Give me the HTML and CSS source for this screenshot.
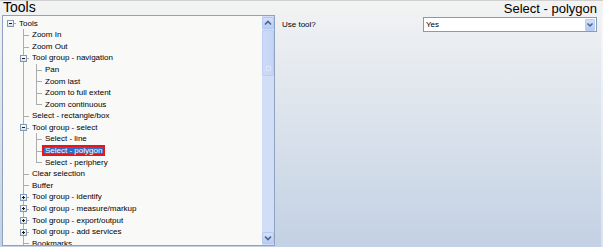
FILE: index.html
```html
<!DOCTYPE html>
<html>
<head>
<meta charset="utf-8">
<link rel="stylesheet" href="styles.css">
</head>
<body>
<div class="app">
  <header class="titlebar">
    <span class="title-left">Tools</span>
    <span class="title-right">Select - polygon</span>
  </header>
  <div class="main">
    <div class="treebox">
      <div class="treeview">
        <ul class="tree">
          <li>
            <div class="row"><span class="gutter"><span class="exp"></span></span><span class="label">Tools</span></div>
            <ul>
              <li><div class="row"><span class="gutter"></span><span class="label">Zoom In</span></div></li>
              <li><div class="row"><span class="gutter"></span><span class="label">Zoom Out</span></div></li>
              <li>
                <div class="row"><span class="gutter"><span class="exp"></span></span><span class="label">Tool group - navigation</span></div>
                <ul>
                  <li><div class="row"><span class="gutter"></span><span class="label">Pan</span></div></li>
                  <li><div class="row"><span class="gutter"></span><span class="label">Zoom last</span></div></li>
                  <li><div class="row"><span class="gutter"></span><span class="label">Zoom to full extent</span></div></li>
                  <li class="last"><div class="row"><span class="gutter"></span><span class="label">Zoom continuous</span></div></li>
                </ul>
              </li>
              <li><div class="row"><span class="gutter"></span><span class="label">Select - rectangle/box</span></div></li>
              <li>
                <div class="row"><span class="gutter"><span class="exp"></span></span><span class="label">Tool group - select</span></div>
                <ul>
                  <li><div class="row"><span class="gutter"></span><span class="label">Select - line</span></div></li>
                  <li><div class="row"><span class="gutter"></span><span class="label sel">Select - polygon</span></div></li>
                  <li class="last"><div class="row"><span class="gutter"></span><span class="label">Select - periphery</span></div></li>
                </ul>
              </li>
              <li><div class="row"><span class="gutter"></span><span class="label">Clear selection</span></div></li>
              <li><div class="row"><span class="gutter"></span><span class="label">Buffer</span></div></li>
              <li><div class="row"><span class="gutter"><span class="exp plus"></span></span><span class="label">Tool group - identify</span></div></li>
              <li><div class="row"><span class="gutter"><span class="exp plus"></span></span><span class="label">Tool group - measure/markup</span></div></li>
              <li><div class="row"><span class="gutter"><span class="exp plus"></span></span><span class="label">Tool group - export/output</span></div></li>
              <li><div class="row"><span class="gutter"><span class="exp plus"></span></span><span class="label">Tool group - add services</span></div></li>
              <li><div class="row"><span class="gutter"></span><span class="label">Bookmarks</span></div></li>
            </ul>
          </li>
        </ul>
      </div>
      <div class="vscroll">
        <div class="sbtn">
          <svg width="10" height="10" viewBox="0 0 10 10"><path d="M2 6.5 L5 3.5 L8 6.5" fill="none" stroke="#4d6185" stroke-width="1.6"/></svg>
        </div>
        <div class="track"><div class="thumb"><span class="grip"></span></div></div>
        <div class="sbtn">
          <svg width="10" height="10" viewBox="0 0 10 10"><path d="M2 3.5 L5 6.5 L8 3.5" fill="none" stroke="#4d6185" stroke-width="1.6"/></svg>
        </div>
      </div>
    </div>
    <div class="props">
      <div class="prop-row">
        <span class="prop-label">Use tool?</span>
        <div class="combo">
          <span class="combo-val">Yes</span>
          <span class="combo-btn">
            <svg width="8" height="8" viewBox="0 0 8 8"><path d="M1.5 2.5 L4 5 L6.5 2.5" fill="none" stroke="#4d6185" stroke-width="1.5"/></svg>
          </span>
        </div>
      </div>
    </div>
  </div>
</div>
</body>
</html>
```

FILE: styles.css
```css
html, body {
  margin: 0;
  padding: 0;
  height: 247px;
  overflow: hidden;
}

body {
  font-family: "Liberation Sans", Arial, sans-serif;
  background: linear-gradient(#f3f3f3 0px, #eef0f2 22px, #c3d1e4 247px);
  color: #000;
}

.app {
  width: 603px;
  height: 247px;
  display: flex;
  flex-direction: column;
  box-sizing: border-box;
  border-top: 1px solid #cfcfcf;
}

.titlebar {
  height: 14px;
  flex: none;
  display: flex;
  justify-content: space-between;
  align-items: flex-start;
  padding: 0 6px 0 3px;
  font-size: 13px;
  line-height: 13px;
  white-space: nowrap;
}

.title-left {
  font-size: 14px;
}

.title-right {
  margin-top: 1px;
}

.main {
  flex: 1;
  display: flex;
  min-height: 0;
}

.treebox {
  width: 273px;
  height: 231px;
  margin-left: 2px;
  box-sizing: border-box;
  border: 1px solid #8fa2bf;
  background: #f9f9f7;
  display: flex;
  flex: none;
}

.treeview {
  flex: 1;
  overflow: hidden;
  padding-top: 1.4px;
}

.tree,
.tree ul {
  list-style: none;
  margin: 0;
  padding: 0;
}

.tree ul {
  padding-left: 13px;
}

.tree li {
  position: relative;
}

.tree ul > li::before {
  content: "";
  position: absolute;
  left: 7px;
  top: 0;
  bottom: 0;
  border-left: 1px solid #acacac;
}

.tree ul > li.last::before {
  bottom: auto;
  height: 6px;
}

.row {
  display: flex;
  align-items: center;
  height: 11.58px;
}

.gutter {
  width: 13px;
  height: 100%;
  flex: none;
  position: relative;
  display: flex;
  align-items: center;
  padding-left: 4px;
  box-sizing: border-box;
}

.gutter::after {
  content: "";
  position: absolute;
  left: 7px;
  right: 0;
  top: 6px;
  border-top: 1px solid #acacac;
}

.exp {
  position: relative;
  z-index: 1;
  width: 7px;
  height: 7px;
  box-sizing: border-box;
  border: 1px solid #8099b8;
  background: linear-gradient(#ffffff, #dedfd6);
  margin-top: 1px;
}

.exp::before {
  content: "";
  position: absolute;
  left: 1px;
  top: 2px;
  width: 3px;
  height: 1px;
  background: #1b1b1b;
}

.exp.plus::after {
  content: "";
  position: absolute;
  left: 2px;
  top: 1px;
  width: 1px;
  height: 3px;
  background: #1b1b1b;
}

.label {
  font-size: 8px;
  line-height: 7px;
  padding: 0 1px;
  border: 2px solid transparent;
  white-space: nowrap;
}

.label.sel {
  background: #316ac5;
  color: #fff;
  border-color: #e8161b;
}

.vscroll {
  width: 12px;
  flex: none;
  display: flex;
  flex-direction: column;
  background: #d2ddf6;
}

.sbtn {
  height: 12px;
  flex: none;
  margin: 1px 0;
  box-sizing: border-box;
  border: 1px solid #b4c7ef;
  border-radius: 2px;
  background: linear-gradient(#d4e1fc, #b8ccf5);
  display: flex;
  align-items: center;
  justify-content: center;
}

.track {
  flex: 1;
  display: flex;
  flex-direction: column;
}

.thumb {
  height: 46px;
  box-sizing: border-box;
  border: 1px solid #bccdf1;
  border-radius: 2px;
  background: linear-gradient(90deg, #cddbfa, #c5d5f7);
  display: flex;
  align-items: flex-end;
  justify-content: center;
  padding-bottom: 4px;
}

.grip {
  width: 5px;
  height: 5px;
  border: 1px solid #dbe5fb;
  box-sizing: border-box;
}

.props {
  flex: 1;
  padding: 2px 4px 0 7px;
  border-right: 2px solid rgba(255, 255, 255, 0.4);
}

.prop-row {
  display: flex;
  justify-content: space-between;
  align-items: center;
  height: 15px;
}

.prop-label {
  font-size: 8px;
  line-height: 10px;
}

.combo {
  width: 174px;
  height: 15px;
  box-sizing: border-box;
  border: 1px solid #7f9db9;
  background: #fff;
  display: flex;
  align-items: center;
  justify-content: space-between;
  padding: 0 1px 0 2px;
}

.combo-val {
  font-size: 8px;
  line-height: 10px;
}

.combo-btn {
  width: 10px;
  height: 12px;
  box-sizing: border-box;
  border: 1px solid #b9cdf5;
  border-radius: 1px;
  background: linear-gradient(#d3e1fc, #b4c9f4);
  display: flex;
  align-items: center;
  justify-content: center;
}
```
